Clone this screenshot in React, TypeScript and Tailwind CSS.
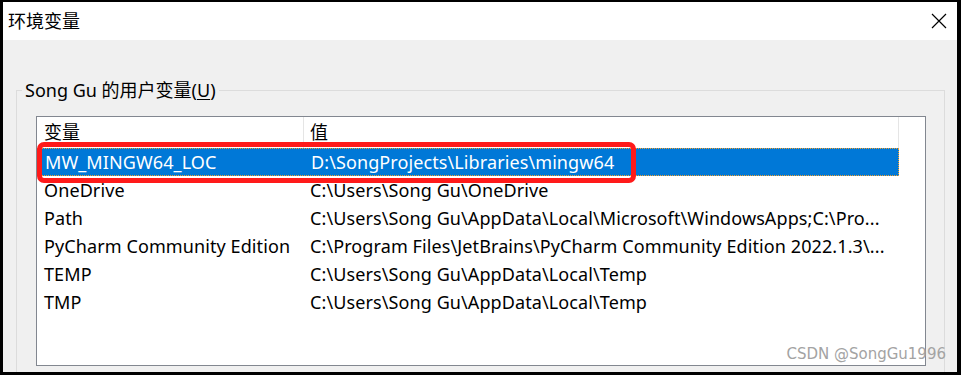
import React from "react";

const rows: [string, string][] = [
  ["MW_MINGW64_LOC", "D:\\SongProjects\\Libraries\\mingw64"],
  ["OneDrive", "C:\\Users\\Song Gu\\OneDrive"],
  ["Path", "C:\\Users\\Song Gu\\AppData\\Local\\Microsoft\\WindowsApps;C:\\Pro..."],
  ["PyCharm Community Edition", "C:\\Program Files\\JetBrains\\PyCharm Community Edition 2022.1.3\\..."],
  ["TEMP", "C:\\Users\\Song Gu\\AppData\\Local\\Temp"],
  ["TMP", "C:\\Users\\Song Gu\\AppData\\Local\\Temp"],
];

function CloseIcon() {
  return (
    <svg width="16" height="16" viewBox="0 0 16 16" className="text-black">
      <path d="M1 1L15 15M15 1L1 15" stroke="currentColor" strokeWidth="1.2" fill="none" />
    </svg>
  );
}

export default function App() {
  return (
    <div
      className="relative flex h-[375px] w-[961px] flex-col overflow-hidden border-t-2 border-r-4 border-b-[3px] border-l-[3px] border-black bg-[#f0f0f0] text-black"
      style={{ fontFamily: '"Noto Sans", "Noto Sans CJK SC", sans-serif' }}
    >
      {/* title bar */}
      <div className="flex h-[38px] shrink-0 items-center justify-between bg-white pl-[5px] pr-[10px]">
        <span className="text-[18px] leading-none">环境变量</span>
        <CloseIcon />
      </div>

      {/* group box */}
      <div className="relative ml-[13px] mr-[12px] mt-[50px] flex-1 border border-b-0 border-[#dcdcdc] pl-[19px] pr-[18px] pt-[25px]">
        <span className="absolute -top-[13px] left-[5px] bg-[#f0f0f0] px-[3px] text-[18px] leading-[24px]">
          Song Gu 的用户变量(<span className="underline underline-offset-2">U</span>)
        </span>

        <div className="relative h-[250px] border border-[#828790] bg-white">
          {/* header */}
          <div className="flex h-[31px] w-[862px] items-center text-[18px]">
            <div className="h-full w-[267px] border-r border-[#e5e5e5] pl-[7px] leading-[31px]">变量</div>
            <div className="h-full flex-1 border-r border-[#e5e5e5] pl-[6px] leading-[31px]">值</div>
          </div>

          {rows.map(([name, value], i) => (
            <div
              key={name}
              className={
                i === 0
                  ? "flex h-[28px] w-[862px] items-center border border-dotted border-[#f0a030] bg-[#0078d7] text-[18px] tracking-[0.1px] text-white"
                  : "flex h-[28px] w-[862px] items-center text-[18px] tracking-[0.1px]"
              }
            >
              <div className="w-[267px] whitespace-nowrap pl-[7px]">{name}</div>
              <div className="w-[585px] overflow-hidden whitespace-nowrap pl-[6px]">{value}</div>
            </div>
          ))}

          {/* red highlight */}
          <div className="absolute left-0 top-[25px] h-[41px] w-[599px] rounded-[7px] border-[5px] border-[#ff1a1a]" />
        </div>
      </div>

      <span
        className="absolute bottom-[10px] right-[11px] text-[15px] leading-none text-[#a3a3a3]"
        style={{ fontFamily: '"DejaVu Sans", sans-serif' }}
      >
        CSDN @SongGu1996
      </span>
    </div>
  );
}
